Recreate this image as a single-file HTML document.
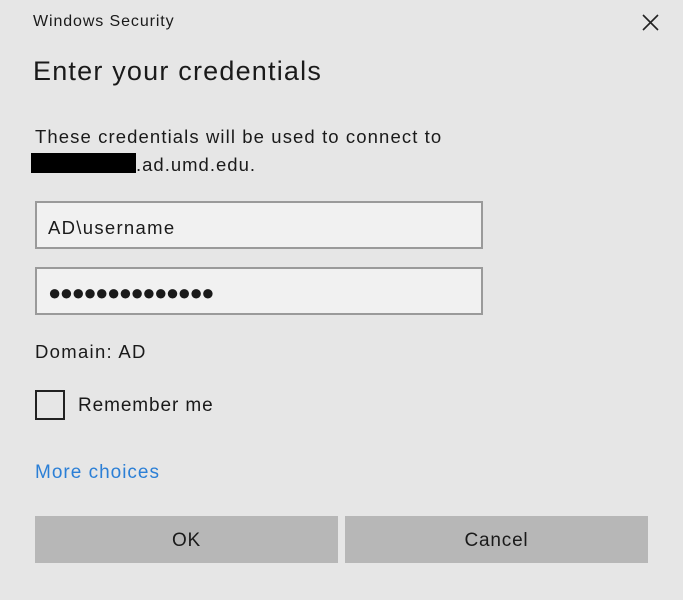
<!DOCTYPE html>
<html><head><style>
body{margin:0;width:683px;height:600px;background:#e6e6e6;font-family:"Liberation Sans",sans-serif;color:#1a1a1a;position:relative;overflow:hidden}
.a{position:absolute;white-space:nowrap}
.inp{position:absolute;left:35px;width:444px;height:44px;background:#f1f1f1;border:2px solid #9a9a9a;box-sizing:content-box}
.btn{position:absolute;top:516px;height:47px;width:303px;background:#b7b7b7;text-align:center;line-height:49px;font-size:19px;letter-spacing:0.8px}
</style></head><body>
<div class="a" style="left:33px;top:13px;font-size:16px;letter-spacing:0.9px">Windows Security</div>
<svg class="a" style="left:642px;top:14px" width="17" height="17" viewBox="0 0 17 17"><path d="M1 1L16 16M16 1L1 16" stroke="#222" stroke-width="1.6"/></svg>
<div class="a" style="left:33px;top:56px;font-size:27px;letter-spacing:1.2px">Enter your credentials</div>
<div class="a" style="left:35px;top:126px;font-size:18.5px;letter-spacing:1.1px">These credentials will be used to connect to</div>
<div class="a" style="left:31px;top:153px;width:105px;height:20px;background:#000"></div>
<div class="a" style="left:136px;top:154px;font-size:18.5px;letter-spacing:1px">.ad.umd.edu.</div>
<div class="inp" style="top:201px"></div>
<div class="a" style="left:48px;top:217px;font-size:18.5px;letter-spacing:1.3px">AD\username</div>
<div class="inp" style="top:267px"></div>
<div class="a" style="left:48px;top:280px;font-size:22px;letter-spacing:-1.5px">●●●●●●●●●●●●●●</div>
<div class="a" style="left:35px;top:341px;font-size:18.5px;letter-spacing:1.3px">Domain: AD</div>
<div class="a" style="left:35px;top:390px;width:26px;height:26px;border:2px solid #222"></div>
<div class="a" style="left:78px;top:395px;font-size:19px;letter-spacing:0.9px">Remember me</div>
<div class="a" style="left:35px;top:462px;font-size:19px;color:#2b7fd6;letter-spacing:1px">More choices</div>
<div class="btn" style="left:35px">OK</div>
<div class="btn" style="left:345px">Cancel</div>
</body></html>
